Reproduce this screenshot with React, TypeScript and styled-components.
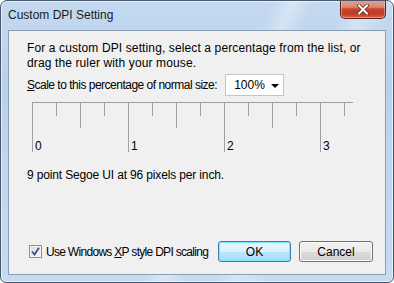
import React, { useState } from 'react';
import styled, { createGlobalStyle } from 'styled-components';

const GlobalStyle = createGlobalStyle`
  html, body {
    margin: 0;
    padding: 0;
    background: #ffffff;
  }
  body {
    font-family: "Liberation Sans", Arial, sans-serif;
    font-size: 12px;
    color: #000;
  }
`;

const Frame = styled.div`
  box-sizing: border-box;
  width: 394px;
  height: 283px;
  display: flex;
  flex-direction: column;
  border: 1px solid #4a5669;
  border-radius: 7px 7px 6px 6px;
  background:
    linear-gradient(115deg, rgba(255,255,255,0) 0%, rgba(255,255,255,0) 52%, rgba(255,255,255,0.35) 56%, rgba(255,255,255,0) 60%, rgba(255,255,255,0) 66%, rgba(255,255,255,0.3) 70%, rgba(255,255,255,0) 76%),
    linear-gradient(180deg, #c3d9f0 0%, #b9d2ec 30%, #c6dbf1 100%);
  box-shadow: inset 0 0 0 1px rgba(255,255,255,0.6);
  overflow: hidden;
`;

const TitleBar = styled.div`
  height: 29px;
  display: flex;
  align-items: flex-start;
  justify-content: space-between;
  padding-left: 7px;
  flex-shrink: 0;
`;

const Title = styled.div`
  padding-top: 7px;
  font-size: 12px;
  color: #1a1a1a;
`;

const CloseButton = styled.div`
  box-sizing: border-box;
  width: 46px;
  height: 19px;
  margin-right: 7px;
  margin-top: -1px;
  border: 1px solid #5a2119;
  border-top: none;
  border-radius: 0 0 5px 5px;
  background: linear-gradient(180deg, #e2a696 0%, #d98671 40%, #c7452e 50%, #c33a22 75%, #d8603f 100%);
  box-shadow: inset 0 0 0 1px rgba(255,220,210,0.45);
  display: flex;
  align-items: center;
  justify-content: center;
`;

const Client = styled.div`
  flex: 1;
  margin: 0 7px 7px 7px;
  border: 1px solid #8b9db4;
  background: #f0f0f0;
  display: flex;
  flex-direction: column;
  padding: 10px 12px 12px 18px;
`;

const Intro = styled.p`
  margin: 0;
  line-height: 15px;
  letter-spacing: 0.12px;
`;

const ScaleRow = styled.div`
  display: flex;
  align-items: center;
  margin-top: 3px;
  gap: 8px;
  height: 22px;
`;

const Tight = styled.span<{ $spacing: number }>`
  letter-spacing: ${p => p.$spacing}px;
  white-space: nowrap;
`;

const Select = styled.div`
  box-sizing: border-box;
  width: 59px;
  height: 22px;
  background: #fff;
  border: 1px solid #c5c5c5;
  display: flex;
  align-items: center;
  justify-content: space-between;
  padding: 0 4px 0 8px;
`;

const Arrow = styled.span`
  width: 0;
  height: 0;
  border-left: 4px solid transparent;
  border-right: 4px solid transparent;
  border-top: 4px solid #000;
  margin-top: 1px;
`;

const RulerWrap = styled.div`
  margin-top: 6px;
  margin-left: 5px;
  height: 51px;
`;

const Info = styled.p`
  margin: 15px 0 0 0;
  line-height: 15px;
  letter-spacing: -0.15px;
`;

const Footer = styled.div`
  margin-top: auto;
  display: flex;
  align-items: center;
  justify-content: space-between;
  padding-left: 2px;
`;

const CheckLabel = styled.label`
  display: flex;
  align-items: center;
  gap: 4px;
  white-space: nowrap;
`;

const Box = styled.span`
  box-sizing: border-box;
  width: 13px;
  height: 13px;
  border: 1px solid #8f8f8f;
  background: linear-gradient(135deg, #dcdcdc 0%, #f6f6f6 100%);
  display: flex;
  align-items: center;
  justify-content: center;
  box-shadow: inset 0 0 0 1px #f4f4f4;
`;

const Buttons = styled.div`
  display: flex;
  gap: 8px;
`;

const Button = styled.button<{ $default?: boolean }>`
  box-sizing: border-box;
  width: ${p => (p.$default ? 73 : 74)}px;
  height: 21px;
  font-family: inherit;
  font-size: 12px;
  padding: 0;
  border-radius: 3px;
  border: 1px solid ${p => (p.$default ? '#3c7fb1' : '#707070')};
  background: ${p =>
    p.$default
      ? 'linear-gradient(180deg, #eaf6fd 0%, #d9f0fc 50%, #bee6fd 51%, #a7d9f5 100%)'
      : 'linear-gradient(180deg, #f2f2f2 0%, #ebebeb 50%, #dddddd 51%, #cfcfcf 100%)'};
  box-shadow: inset 0 0 0 1px ${p => (p.$default ? '#7ee2f8' : '#fcfcfc')};
  color: #000;
`;

const ticks = Array.from({ length: 14 }, (_, i) => i);

function Ruler() {
  return (
    <svg width="322" height="51" viewBox="0 0 322 51">
      <line x1="0" y1="0.5" x2="321" y2="0.5" stroke="#a0a0a0" />
      {ticks.map(i => {
        const x = i * 24 + 0.5;
        const len = i % 4 === 0 ? 50 : i % 2 === 0 ? 26 : 14;
        return <line key={i} x1={x} y1="0" x2={x} y2={len} stroke="#a0a0a0" />;
      })}
      {[0, 1, 2, 3].map(n => (
        <text key={n} x={n * 96 + 3} y="48" fontSize="12" fill="#000" fontFamily="Liberation Sans, Arial, sans-serif">
          {n}
        </text>
      ))}
    </svg>
  );
}

export default function App() {
  const [xp, setXp] = useState(true);
  return (
    <>
      <GlobalStyle />
      <Frame>
        <TitleBar>
          <Title>Custom DPI Setting</Title>
          <CloseButton>
            <svg width="12" height="11" viewBox="0 0 12 11">
              <path d="M2 1.5 L10 9.5 M10 1.5 L2 9.5" stroke="#5b1d14" strokeWidth="3.4" strokeLinecap="square" />
              <path d="M2 1.5 L10 9.5 M10 1.5 L2 9.5" stroke="#ffffff" strokeWidth="2" strokeLinecap="square" />
            </svg>
          </CloseButton>
        </TitleBar>
        <Client>
          <Intro>
            For a custom DPI setting, select a percentage from the list, or
            <br />
            drag the ruler with your mouse.
          </Intro>
          <ScaleRow>
            <Tight $spacing={-0.5}>
              <u>S</u>cale to this percentage of normal size:
            </Tight>
            <Select>
              <span>100%</span>
              <Arrow />
            </Select>
          </ScaleRow>
          <RulerWrap>
            <Ruler />
          </RulerWrap>
          <Info>9 point Segoe UI at 96 pixels per inch.</Info>
          <Footer>
            <CheckLabel onClick={() => setXp(v => !v)}>
              <Box>
                {xp && (
                  <svg width="9" height="9" viewBox="0 0 9 9">
                    <path d="M1 4.5 L3.5 7.5 L8 0.8" stroke="#3b4f8f" strokeWidth="1.8" fill="none" />
                  </svg>
                )}
              </Box>
              <Tight $spacing={-0.7}>
                Use Windows <u>X</u>P style DPI scaling
              </Tight>
            </CheckLabel>
            <Buttons>
              <Button $default>OK</Button>
              <Button>Cancel</Button>
            </Buttons>
          </Footer>
        </Client>
      </Frame>
    </>
  );
}
